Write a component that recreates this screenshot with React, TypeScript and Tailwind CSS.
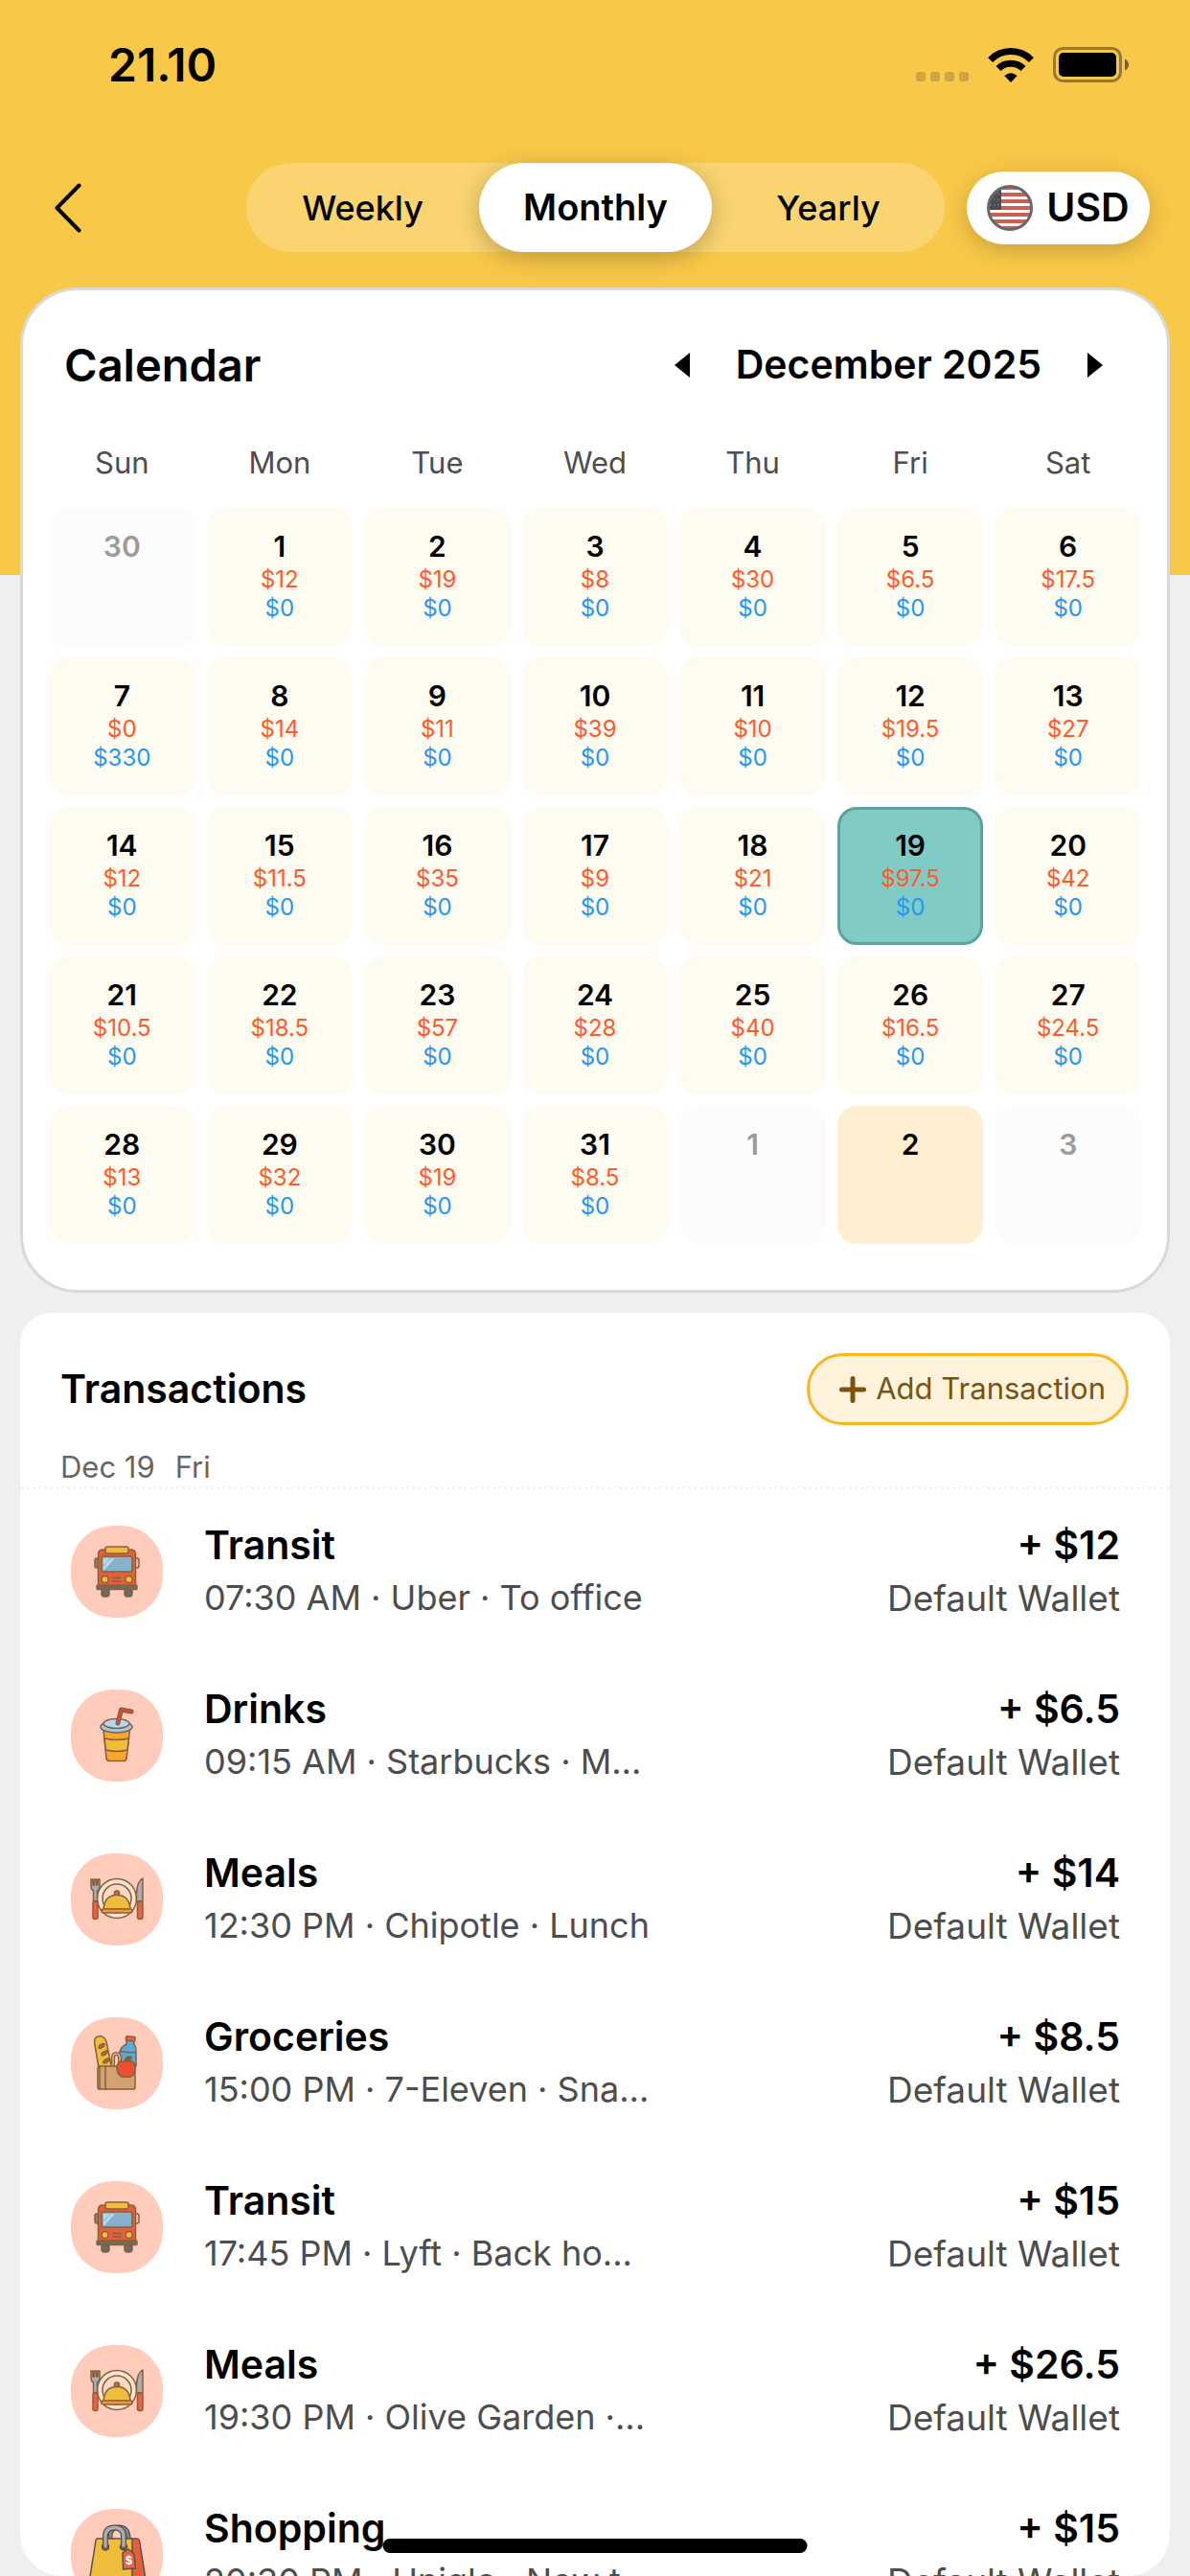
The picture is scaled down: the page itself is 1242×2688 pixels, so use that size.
import React, { useState } from 'react';
import clsx from 'clsx';

type IconName = 'bus' | 'cup' | 'meal' | 'groceries' | 'shopping';

interface Day {
    day: number;
    expense?: string;
    income?: string;
    outside?: boolean;
    today?: boolean;
}

interface Transaction {
    icon: IconName;
    title: string;
    detail: string;
    amount: string;
}

const WEEKDAYS = ['Sun', 'Mon', 'Tue', 'Wed', 'Thu', 'Fri', 'Sat'];

const EXPENSES = [
    '12', '19', '8', '30', '6.5', '17.5', '0', '14', '11', '39', '10', '19.5', '27', '12', '11.5', '35',
    '9', '21', '97.5', '42', '10.5', '18.5', '57', '28', '40', '16.5', '24.5', '13', '32', '19', '8.5',
];

const DAYS: Day[] = [
    { day: 30, outside: true },
    ...EXPENSES.map((value, i) => ({
        day: i + 1,
        expense: `$${value}`,
        income: i + 1 === 7 ? '$330' : '$0',
    })),
    { day: 1, outside: true },
    { day: 2, today: true },
    { day: 3, outside: true },
];

const TRANSACTIONS: Transaction[] = [
    { icon: 'bus', title: 'Transit', detail: '07:30 AM · Uber · To office', amount: '+ $12' },
    { icon: 'cup', title: 'Drinks', detail: '09:15 AM · Starbucks · M...', amount: '+ $6.5' },
    { icon: 'meal', title: 'Meals', detail: '12:30 PM · Chipotle · Lunch', amount: '+ $14' },
    { icon: 'groceries', title: 'Groceries', detail: '15:00 PM · 7-Eleven · Sna...', amount: '+ $8.5' },
    { icon: 'bus', title: 'Transit', detail: '17:45 PM · Lyft · Back ho...', amount: '+ $15' },
    { icon: 'meal', title: 'Meals', detail: '19:30 PM · Olive Garden ·...', amount: '+ $26.5' },
    { icon: 'shopping', title: 'Shopping', detail: '20:30 PM · Uniqlo · New t...', amount: '+ $15' },
];

function BusIcon() {
    return (
        <g stroke="#86603a" strokeWidth="1.5" strokeLinejoin="round">
            <rect x="25" y="34" width="5" height="10" rx="2" fill="#8b8076" />
            <rect x="66" y="34" width="5" height="10" rx="2" fill="#f6c3a8" />
            <rect x="32" y="62" width="8" height="12" rx="3" fill="#6d6a68" />
            <rect x="56" y="62" width="8" height="12" rx="3" fill="#6d6a68" />
            <path d="M28.5 63V30q0-5 5-5h29q5 0 5 5v33z" fill="#e5603a" />
            <rect x="36" y="22" width="24" height="7" rx="2" fill="#efbd3b" />
            <rect x="32" y="32" width="32" height="16" rx="2" fill="#85b1cb" />
            <path d="M34 47V34h13z" fill="#b7d9ec" stroke="none" />
            <path d="M36 46l10-12M34 42l7-8" stroke="#85b1cb" strokeWidth="1" />
            <circle cx="35.5" cy="56" r="3.6" fill="#efbd3b" />
            <circle cx="60.5" cy="56" r="3.6" fill="#efbd3b" />
            <path d="M43 54.5h10M43 58h10" fill="none" />
            <rect x="27" y="62" width="42" height="4.5" rx="1" fill="#6d6a68" />
        </g>
    );
}

function CupIcon() {
    return (
        <g stroke="#86603a" strokeWidth="1.5" strokeLinejoin="round" strokeLinecap="round">
            <path d="M34 42l3 30q.5 2.500 3 2.500h15q2.500 0 3-2.500L61.500 42z" fill="#f9a72c" />
            <path d="M35 51q12.500 3 25.500 0l-1.500 12q-11 3-22.500 0z" fill="#efbd3b" />
            <ellipse cx="47.5" cy="39" rx="16.5" ry="6" fill="#9fc9e9" />
            <ellipse cx="47.5" cy="35.5" rx="13.5" ry="5" fill="#b3d8f2" />
            <path d="M49 35l3.5-14 10.500 2" fill="none" strokeWidth="5" />
            <path d="M49 35l3.5-14 10.500 2" fill="none" stroke="#d9483a" strokeWidth="2.5" />
        </g>
    );
}

function MealIcon() {
    return (
        <g stroke="#86603a" strokeWidth="1.5" strokeLinejoin="round" strokeLinecap="round">
            <circle cx="48" cy="47" r="20.5" fill="#fde3d0" />
            <circle cx="48" cy="47" r="15" fill="#fbd9c4" />
            <circle cx="48" cy="41.5" r="2.5" fill="#e5603a" />
            <path d="M34 58.500q1-15 14-15t14 15z" fill="#efbd3b" />
            <rect x="32" y="58" width="32" height="4" rx="2" fill="#f39a35" />
            <path d="M21 27v7q0 4 2.500 5v11h4V39q2.500-1 2.500-5v-7h-2v6h-1.500v-6h-2v6H23v-6z" fill="#a8adb3" />
            <rect x="23" y="50" width="5" height="18.5" rx="2" fill="#ef5f42" />
            <path d="M75 26q-6 3-6.500 16v8H75z" fill="#a8adb3" />
            <rect x="69.5" y="50" width="5.5" height="18.5" rx="2" fill="#ef5f42" />
        </g>
    );
}

function GroceriesIcon() {
    return (
        <g stroke="#86603a" strokeWidth="1.5" strokeLinejoin="round" strokeLinecap="round">
            <path d="M58 24h8v4q2 3 2 7v16H51V36q1-5 7-8z" fill="#5ba9dc" />
            <path d="M52 35.500q8 2 15.500 1" fill="none" />
            <rect x="57.5" y="20" width="9.5" height="4.5" rx="1" fill="#ef5f42" transform="rotate(6 62 22)" />
            <path d="M25 29q-2-9 5-9.500 5 0 7 6l5.500 27H29z" fill="#efbd3b" />
            <g fill="#a8703a">
                <ellipse cx="32" cy="30" rx="3.5" ry="1.5" transform="rotate(-32 32 30)" />
                <ellipse cx="35" cy="37.5" rx="3.5" ry="1.5" transform="rotate(-32 35 37.5)" />
                <ellipse cx="37" cy="45.5" rx="3.5" ry="1.5" transform="rotate(-32 37 45.5)" />
            </g>
            <path d="M44 51V42q0-4 3.500-4t3.500 4v9" fill="none" strokeWidth="4" />
            <path d="M44 51V42q0-4 3.500-4t3.500 4v9" fill="none" stroke="#e2b083" />
            <rect x="28" y="51" width="39" height="24" rx="1.5" fill="#d3a273" />
            <path d="M36 51v24M30 51v24" fill="none" />
            <path d="M57.500 46.500q9-3 9.500 5.500 0 9-6 10.500-3.500-1-7 0Q48 60 48 52q1-8 9.500-5.500z" fill="#ee4f33" />
            <path d="M57 46q-2-5 6-5 0 5-6 5z" fill="#7a6138" />
        </g>
    );
}

function ShoppingIcon() {
    return (
        <g stroke="#5b5048" strokeWidth="1.5" strokeLinejoin="round" strokeLinecap="round">
            <path d="M41 36V29q0-10 9-10t10 10v4" fill="none" strokeWidth="5" />
            <path d="M41 36V29q0-10 9-10t10 10v4" fill="none" stroke="#85898f" strokeWidth="2.5" />
            <path d="M62 31h7q2 0 2.500 2l8 50H62z" fill="#e5603a" />
            <path d="M27.500 31H64v52H18l8-50q.3-2 1.500-2z" fill="#efbd3b" />
            <circle cx="36" cy="39.5" r="3.5" fill="#c9963a" />
            <circle cx="55" cy="39.5" r="3.5" fill="#c9963a" />
            <path d="M36 39V29q0-9.500 9.500-9.500T55 29v10" fill="none" strokeWidth="6" />
            <path d="M36 39V29q0-9.500 9.500-9.500T55 29v10" fill="none" stroke="#a9adb3" strokeWidth="3.5" />
            <path d="M55 40q2 4 5 6" fill="none" />
            <path d="M54 46l6-4 6 5 1.500 15-13 1z" fill="#ef5f42" />
            <text x="60.5" y="58" textAnchor="middle" fontSize="12" fontWeight="700" fill="#fff" stroke="none">$</text>
        </g>
    );
}

const ICONS: Record<IconName, React.ReactNode> = {
    bus: <BusIcon />,
    cup: <CupIcon />,
    meal: <MealIcon />,
    groceries: <GroceriesIcon />,
    shopping: <ShoppingIcon />,
};

function StatusBar() {
    return (
        <div className="flex h-[136px] items-center justify-between pr-[63px] pl-[113px]">
            <span className="text-[48px] font-semibold">21.10</span>
            <div className="flex items-center">
                <div className="mt-6 mr-5 flex gap-[5px]">
                    {[0, 1, 2, 3].map((i) => (
                        <span key={i} className="size-[10px] rounded-[3px] bg-[#cfa541]" />
                    ))}
                </div>
                <svg viewBox="0 0 48 36" className="mr-5 h-9 w-12" fill="none" stroke="#000" strokeWidth="7">
                    <path d="M2.600 12.600A30 30 0 0 1 45.400 12.600" />
                    <path d="M11 21.500A18.500 18.500 0 0 1 37 21.500" />
                    <path d="M24 36l-6.700-7q6.700-5.500 13.400 0z" fill="#000" stroke="none" />
                </svg>
                <svg viewBox="0 0 80 38" className="h-[38px] w-20">
                    <rect x="1.5" y="1.5" width="69" height="34" rx="9" fill="none" stroke="#9b763c" strokeWidth="3" />
                    <rect x="6" y="6" width="60" height="25" rx="5" />
                    <path d="M75 12.500q4 2 4 6t-4 6z" fill="#7f5f2c" />
                </svg>
            </div>
        </div>
    );
}

function Flag() {
    return (
        <svg viewBox="0 0 48 48" className="size-12">
            <defs>
                <clipPath id="flag">
                    <circle cx="24" cy="24" r="23" />
                </clipPath>
            </defs>
            <g clipPath="url(#flag)">
                <rect width="48" height="48" fill="#fff" />
                {[0, 1, 2, 3, 4, 5, 6].map((i) => (
                    <rect key={i} y={1 + i * 7} width="48" height="4" fill="#cb5f55" />
                ))}
                <rect width="15" height="26" fill="#4d4d50" />
                <path d="M3 9h11M3 15h11M3 21h11" stroke="#77777a" strokeWidth="1.5" strokeDasharray="1.5 2.5" />
            </g>
            <circle cx="24" cy="24" r="22.5" fill="none" stroke="#68686a" strokeWidth="3" />
        </svg>
    );
}

function Header() {
    const [period, setPeriod] = useState('Monthly');

    return (
        <div className="mt-[34px] flex items-center pr-[42px] pl-[57px]">
            <div className="w-[200px]">
                <button aria-label="Back" className="block">
                    <svg viewBox="0 0 28 52" className="h-[52px] w-7" fill="none" stroke="#000" strokeWidth="4" strokeLinecap="round" strokeLinejoin="round">
                        <path d="M25.500 2.500L2.500 26l23 23.500" />
                    </svg>
                </button>
            </div>
            <div className="grid h-[93px] flex-1 grid-cols-3 rounded-full bg-[#f9d470]">
                {['Weekly', 'Monthly', 'Yearly'].map((label) => (
                    <button
                        key={label}
                        onClick={() => setPeriod(label)}
                        className={clsx(
                            'rounded-full',
                            period === label
                                ? 'bg-white text-[38px] font-semibold shadow-[0_6px_24px_rgba(0,0,0,0.24)]'
                                : 'text-[36px] font-medium'
                        )}
                    >
                        {label}
                    </button>
                ))}
            </div>
            <button className="ml-[23px] flex h-[76px] w-[191px] items-center justify-center gap-[14px] rounded-full bg-white text-[41px] font-semibold shadow-[0_6px_24px_rgba(0,0,0,0.2)]">
                <Flag />
                USD
            </button>
        </div>
    );
}

function Calendar() {
    const [selected, setSelected] = useState(19);

    return (
        <section className="mx-[21px] mt-[37px] rounded-[60px] border-[3px] border-[#d9d9d9] bg-white px-[27px] pt-9 pb-12">
            <div className="flex h-[84px] items-center justify-between pr-10 pl-4">
                <h2 className="text-[47px] font-semibold">Calendar</h2>
                <div className="flex items-center gap-12">
                    <button aria-label="Previous month">
                        <svg viewBox="0 0 16 26" className="h-[26px] w-4">
                            <path d="M16 0v26L0 13z" />
                        </svg>
                    </button>
                    <span className="text-[41px] font-semibold">December 2025</span>
                    <button aria-label="Next month">
                        <svg viewBox="0 0 16 26" className="h-[26px] w-4">
                            <path d="M0 0v26l16-13z" />
                        </svg>
                    </button>
                </div>
            </div>
            <div className="mt-10 mb-[27px] grid grid-cols-7 gap-3">
                {WEEKDAYS.map((name) => (
                    <span key={name} className="text-center text-[31px] leading-10 text-[#4d4d4d]">{name}</span>
                ))}
            </div>
            <div className="grid grid-cols-7 gap-3">
                {DAYS.map((d, i) => {
                    const isSelected = !d.outside && !d.today && d.day === selected;
                    return (
                        <button
                            key={i}
                            onClick={() => d.expense && setSelected(d.day)}
                            className={clsx(
                                'flex h-36 flex-col items-center rounded-[20px] border-[3px] pt-[17px]',
                                isSelected && 'border-[#5ba49d] bg-[#80cbc4]',
                                d.today && 'border-[#fdefd0] bg-[#fdefd0]',
                                d.outside && 'border-[#fcfcfc] bg-[#fcfcfc] text-[#9b9b9b]',
                                d.expense && !isSelected && 'border-[#fefbf0] bg-[#fefbf0]'
                            )}
                        >
                            <span className="text-[30px] leading-10 font-semibold">{d.day}</span>
                            <span className="text-[24px] leading-[30px] text-[#ff5a2c]">{d.expense}</span>
                            <span className="text-[24px] leading-[30px] text-[#2697f3]">{d.income}</span>
                        </button>
                    );
                })}
            </div>
        </section>
    );
}

function TransactionRow({ item }: { item: Transaction }) {
    return (
        <li className="flex h-[171px] items-center pr-[52px] pl-[53px]">
            <svg viewBox="0 0 96 96" className="mr-[43px] size-24 shrink-0 rounded-[44px] bg-[#ffccbc]">
                {ICONS[item.icon]}
            </svg>
            <div className="min-w-0 flex-1 whitespace-nowrap">
                <p className="text-[41px] leading-[55px] font-semibold">{item.title}</p>
                <p className="text-[36px] leading-[55px] text-[#4d4d4d]">{item.detail}</p>
            </div>
            <div className="text-right whitespace-nowrap">
                <p className="text-[41px] leading-[55px] font-semibold">{item.amount}</p>
                <p className="text-[37px] leading-[55px] text-[#4d4d4d]">Default Wallet</p>
            </div>
        </li>
    );
}

function Transactions() {
    return (
        <section className="mx-[21px] mt-[21px] min-h-0 flex-1 overflow-hidden rounded-t-[32px] rounded-b-[44px] bg-white pt-[42px]">
            <div className="flex items-center justify-between pr-[43px] pl-[42px]">
                <h2 className="text-[41px] font-semibold">Transactions</h2>
                <button className="flex h-[75px] items-center gap-[10px] rounded-full border-[3px] border-[#fbb61f] bg-[#fff3dc] pr-[21px] pl-[31px] text-[31px] text-[#785413]">
                    <svg viewBox="0 0 28 28" className="size-7" stroke="#785413" strokeWidth="5" strokeLinecap="round">
                        <path d="M14 2.500v23M2.500 14h23" />
                    </svg>
                    Add Transaction
                </button>
            </div>
            <p className="mt-6 flex gap-[21px] px-[42px] text-[31px] leading-10 text-[#666]">
                <span>Dec 19</span>
                <span>Fri</span>
            </p>
            <ul className="border-t-[3px] border-dotted border-[#f4f4f4]">
                {TRANSACTIONS.map((item, i) => (
                    <TransactionRow key={i} item={item} />
                ))}
            </ul>
        </section>
    );
}

export default function App() {
    return (
        <main className="relative isolate flex h-screen flex-col overflow-hidden bg-[#efefef] font-['Inter',sans-serif] text-black">
            <div className="absolute inset-x-0 top-0 -z-10 h-[600px] bg-[#f8c848]" />
            <StatusBar />
            <Header />
            <Calendar />
            <Transactions />
            <div className="absolute bottom-6 left-1/2 h-[15px] w-[443px] -translate-x-1/2 rounded-full bg-black" />
        </main>
    );
}
